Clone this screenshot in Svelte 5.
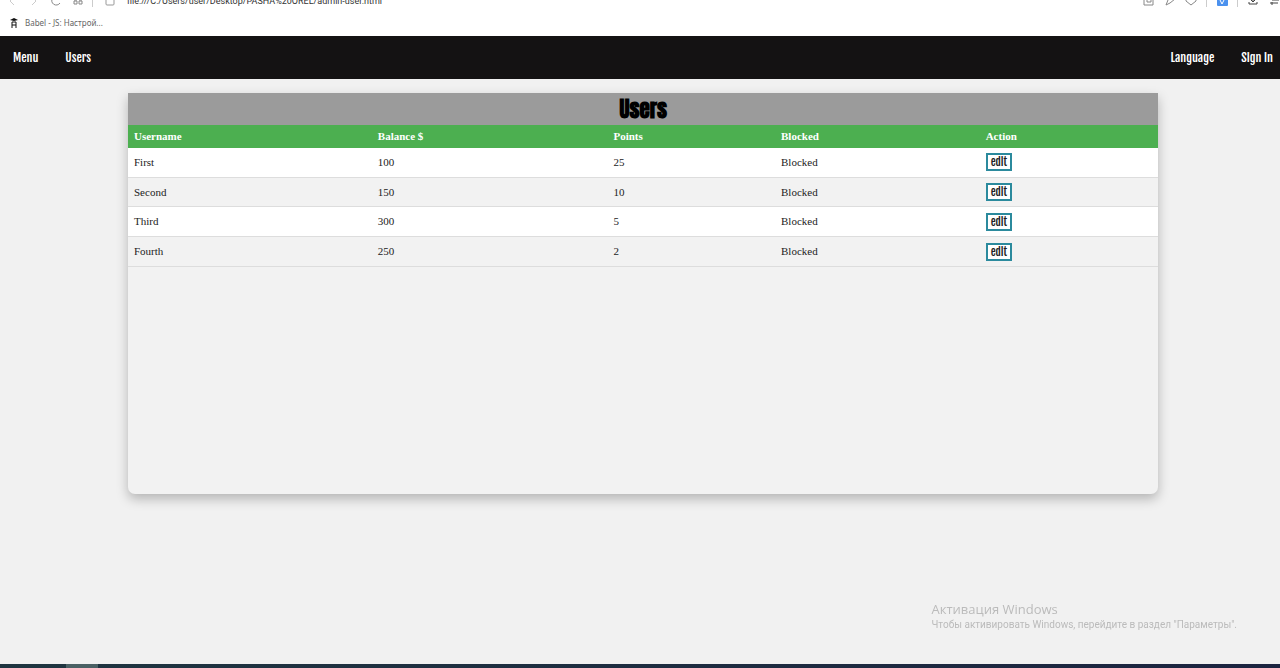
<script>
    let users = [
        { name: 'First', balance: 100, points: 25, status: 'Blocked' },
        { name: 'Second', balance: 150, points: 10, status: 'Blocked' },
        { name: 'Third', balance: 300, points: 5, status: 'Blocked' },
        { name: 'Fourth', balance: 250, points: 2, status: 'Blocked' }
    ]
</script>

<div class="browser">
    <div class="toolbar">
        <div class="tools">
            <button class="tool faded" aria-label="Back"><svg width="12" height="12" viewBox="0 0 12 12"><path d="m8 2-4 4 4 4" /></svg></button>
            <button class="tool faded" aria-label="Forward"><svg width="12" height="12" viewBox="0 0 12 12"><path d="m4 2 4 4-4 4" /></svg></button>
            <button class="tool" aria-label="Reload"><svg width="12" height="12" viewBox="0 0 12 12"><path d="M9 2A4.500 4.500 0 1 0 10 8" /></svg></button>
            <button class="tool" aria-label="Speed dial"><svg width="12" height="12" viewBox="0 0 12 12"><path d="M2 2h3v3H2zM7 2h3v3H7zM2 6h3v3H2zM7 6h3v3H7z" /></svg></button>
        </div>
        <span class="sep"></span>
        <svg class="page-icon" width="10" height="12" viewBox="0 0 10 12"><path d="M1 1h8v8q0 1-1 1H2q-1 0-1-1z" /></svg>
        <input class="address" aria-label="Address" value="file:///C:/Users/user/Desktop/PASHA%20OREL/admin-user.html" />
        <div class="actions">
            <button class="tool" aria-label="Snapshot"><svg width="12" height="12" viewBox="0 0 12 12"><path d="M1 1h9v9H1zM4 4v3h4V4z" /></svg></button>
            <button class="tool" aria-label="Send"><svg width="12" height="12" viewBox="0 0 12 12"><path d="m3 1 8 3-5 4-4 2 2-5z" /></svg></button>
            <button class="tool" aria-label="Favourite"><svg width="12" height="12" viewBox="0 0 12 12"><path d="M6 10 1 6V2h4l1 1 1-1h4v4z" /></svg></button>
            <span class="sep"></span>
            <button class="tool" aria-label="Extension"><svg width="12" height="12" viewBox="0 0 12 12"><rect x="1" y="0" width="11" height="11" rx="1" fill="#4b91ee" stroke="none" /><path d="m4 5 2 4 2-4" stroke="#fff" /></svg></button>
            <span class="sep"></span>
            <button class="tool dark" aria-label="Downloads"><svg width="12" height="12" viewBox="0 0 12 12"><path d="M6 0v7M3 4l3 3 3-3M2 7v2h8V7" /></svg></button>
            <button class="tool dark" aria-label="Settings"><svg width="12" height="12" viewBox="0 0 12 12"><path d="M4 5h7M2 8h8M4 7v3" /></svg></button>
        </div>
    </div>
    <div class="bookmarks">
        <a href="#babel">
            <svg width="8" height="10" viewBox="0 0 8 10"><path d="M0 2 4 0l4 2-4 1z" fill="#111" stroke="none" /><path d="M2 10V4h4v6M2 7h4" stroke="#111" /></svg>
            Babel - JS: Настрой...
        </a>
    </div>
</div>

<nav>
    <div class="links">
        <a href="#menu">Menu</a>
        <a href="#users">Users</a>
    </div>
    <div class="links">
        <a href="#language">Language</a>
        <a href="#signin">Sign in</a>
    </div>
</nav>

<main>
    <h1>Users</h1>
    <table>
        <thead>
            <tr>
                <th class="name">Username</th>
                <th class="balance">Balance $</th>
                <th class="points">Points</th>
                <th class="blocked">Blocked</th>
                <th>Action</th>
            </tr>
        </thead>
        <tbody>
            {#each users as user}
                <tr>
                    <td>{user.name}</td>
                    <td>{user.balance}</td>
                    <td>{user.points}</td>
                    <td>{user.status}</td>
                    <td><button class="edit">edit</button></td>
                </tr>
            {/each}
        </tbody>
    </table>
</main>

<aside>
    <p class="title">Активация Windows</p>
    <p>Чтобы активировать Windows, перейдите в раздел "Параметры".</p>
</aside>

<div class="taskbar"><span></span></div>

<style>
    :global(body) {
        margin: 0;
        background: #f1f1f1;
    }

    button {
        padding: 0;
        border: 0;
        background: none;
        cursor: pointer;
    }

    a {
        text-decoration: none;
    }

    svg {
        display: block;
        fill: none;
        stroke: currentColor;
    }

    .browser {
        background: #fff;
        color: #777;
        font-family: "Noto Sans", "Open Sans", sans-serif;
    }

    /* the upper half is scrolled out of the window */
    .toolbar {
        display: flex;
        align-items: center;
        height: 26px;
        margin-top: -12px;
        padding: 0 0 0 6px;
    }

    .tools {
        display: flex;
        gap: 10px;
    }

    .tool {
        color: #888;
    }

    .faded {
        color: #ccc;
    }

    .dark {
        color: #444;
    }

    .sep {
        width: 1px;
        height: 12px;
        background: #ccc;
    }

    .tools + .sep {
        margin: 0 12px 0 8px;
    }

    .page-icon {
        color: #999;
    }

    .address {
        flex: 1;
        margin-left: 12px;
        padding: 0;
        border: 0;
        outline: 0;
        color: #333;
        font: 9px/14px Roboto, "Open Sans", sans-serif;
    }

    .actions {
        display: flex;
        align-items: center;
        gap: 9px;
    }

    .bookmarks {
        display: flex;
        height: 18px;
        padding: 0 10px 4px;
    }

    .bookmarks a {
        display: flex;
        align-items: center;
        gap: 7px;
        color: #666;
        font-size: 8px;
        line-height: 18px;
    }

    nav {
        display: flex;
        justify-content: space-between;
        align-items: center;
        height: 43px;
        padding: 0 7px 0 13px;
        background: #141213;
    }

    .links {
        display: flex;
        gap: 27px;
    }

    nav a {
        color: #fff;
        font: 12px/20px "Fjalla One", "Liberation Sans Narrow", sans-serif;
    }

    main {
        width: 80.5%;
        min-height: 60vh;
        margin: 14px 0 32px 10%;
        border-radius: 0 0 7px 7px;
        background: #f2f2f2;
        box-shadow: 0 5px 12px rgba(0, 0, 0, 0.25);
    }

    h1 {
        margin: 0;
        background: #9b9b9b;
        color: #000;
        text-align: center;
        font: bold 21px/32px "Anton", "Fjalla One", "Liberation Sans Narrow", sans-serif;
    }

    table {
        width: 100%;
        height: 142px;
        table-layout: fixed;
        border-collapse: collapse;
        font: 11px/13px "Liberation Serif", "Times New Roman", serif;
    }

    th,
    td {
        padding: 0 6px;
        text-align: left;
    }

    th {
        height: 23px;
        background: #4caf50;
        color: #fff;
    }

    td {
        height: 28px;
        border-bottom: 1px solid #ddd;
        color: #222;
    }

    .name {
        width: 22.5%;
    }

    .balance {
        width: 21.7%;
    }

    .points {
        width: 15.1%;
    }

    .blocked {
        width: 18.7%;
    }

    tbody tr:nth-child(odd) {
        background: #fff;
    }

    .edit {
        display: block;
        padding: 0 3px;
        border: 2px solid #2b8a9d;
        background: #fff;
        color: #222;
        font: 11px/14px "Fjalla One", "Liberation Sans Narrow", sans-serif;
    }

    aside {
        position: fixed;
        right: 43px;
        bottom: 36px;
        color: #bbb;
        font: 10px/14px Roboto, "Open Sans", sans-serif;
    }

    aside p {
        margin: 0;
    }

    aside .title {
        font: 13px/18px "Open Sans", "Noto Sans", sans-serif;
    }

    .taskbar {
        position: fixed;
        right: 0;
        bottom: 0;
        left: 0;
        height: 4px;
        background: linear-gradient(to right, #1f3540, #1c2440);
    }

    .taskbar span {
        display: block;
        width: 32px;
        height: 4px;
        margin-left: 66px;
        background: #4a6064;
    }
</style>
